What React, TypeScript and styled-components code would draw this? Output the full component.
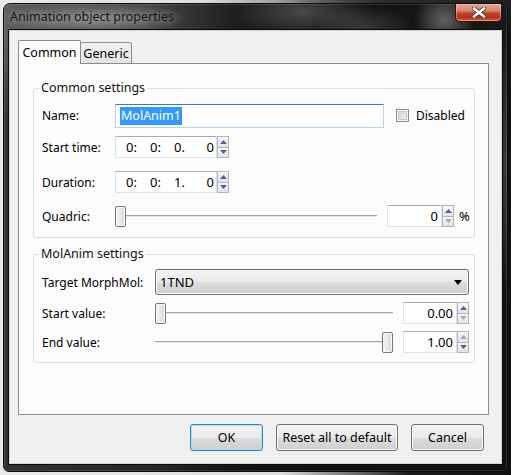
import React from "react";
import styled, { createGlobalStyle } from "styled-components";

const GlobalStyle = createGlobalStyle`
  html, body {
    margin: 0;
    padding: 0;
  }
  body {
    width: 511px;
    height: 475px;
    overflow: hidden;
    background:
      radial-gradient(220px 40px at 420px 0px, #2a2a2a, rgba(42, 42, 42, 0)),
      linear-gradient(to right, #e9e9e9 0%, #dcdcdc 55%, #1a1a1a 80%, #111 100%);
    font-family: "Noto Sans", "Liberation Sans", sans-serif;
    font-size: 12px;
    color: #000;
  }
  * {
    box-sizing: border-box;
  }
`;

type SpinState = { up: boolean; down: boolean };

function Slider({ width, value }: { width: number; value: number }) {
  return (
    <SliderBox $w={width}>
      <Track />
      <Thumb style={{ left: Math.round(value * (width - 11)) }} />
    </SliderBox>
  );
}

function Arrows({ up, down }: SpinState) {
  return (
    <ArrowStack>
      <ArrowButton $on={up}>
        <svg width="7" height="4" viewBox="0 0 7 4">
          <path d="M0 4 L3.5 0 L7 4 Z" fill="currentColor" />
        </svg>
      </ArrowButton>
      <ArrowButton $on={down}>
        <svg width="7" height="4" viewBox="0 0 7 4">
          <path d="M0 0 L7 0 L3.5 4 Z" fill="currentColor" />
        </svg>
      </ArrowButton>
    </ArrowStack>
  );
}

function SpinBox({ width, value, up, down }: { width: number; value: string } & SpinState) {
  return (
    <Spin>
      <SpinField $w={width}>{value}</SpinField>
      <Arrows up={up} down={down} />
    </Spin>
  );
}

function TimeSpin({ parts }: { parts: string[] }) {
  return (
    <Spin>
      <TimeField>
        <Seg>{parts[0]}:</Seg>
        <Seg>{parts[1]}:</Seg>
        <Seg>{parts[2]}.</Seg>
        <LastSeg>{parts[3]}</LastSeg>
      </TimeField>
      <Arrows up down />
    </Spin>
  );
}

export default function App() {
  return (
    <>
      <GlobalStyle />
      <Window>
        <TitleBar>
          <Title>Animation object properties</Title>
          <CloseButton>
            <svg width="14" height="11" viewBox="0 0 14 11">
              <path
                d="M2 1.5 L12 9.5 M12 1.5 L2 9.5"
                stroke="#3a3a3a"
                strokeWidth="4.2"
                strokeLinecap="square"
              />
              <path
                d="M2 1.5 L12 9.5 M12 1.5 L2 9.5"
                stroke="#fff"
                strokeWidth="2.4"
                strokeLinecap="square"
              />
            </svg>
          </CloseButton>
        </TitleBar>

        <Client>
          <TabStrip>
            <Tab $active $w={63}>Common</Tab>
            <Tab $w={51}>Generic</Tab>
          </TabStrip>

          <Panel>
            <Group>
              <Legend>Common settings</Legend>
              <Row $h={25} $mt={7}>
                <Label $w={73}>Name:</Label>
                <NameInput>
                  <Selected>MolAnim1</Selected>
                </NameInput>
                <Check />
                <CheckText>Disabled</CheckText>
              </Row>
              <Row $h={22} $mt={8}>
                <Label $w={73}>Start time:</Label>
                <TimeSpin parts={["0", "0", "0", "0"]} />
              </Row>
              <Row $h={22} $mt={13}>
                <Label $w={73}>Duration:</Label>
                <TimeSpin parts={["0", "0", "1", "0"]} />
              </Row>
              <Row $h={24} $mt={11} $mb={9}>
                <Label $w={73}>Quadric:</Label>
                <Slider width={262} value={0} />
                <Spacer $w={10} />
                <SpinBox width={55} value="0" up down={false} />
                <Unit>%</Unit>
              </Row>
            </Group>

            <Group $mt={8}>
              <Legend>MolAnim settings</Legend>
              <Row $h={26} $mt={7}>
                <Label $w={113}>Target MorphMol:</Label>
                <Combo>
                  <span>1TND</span>
                  <svg width="8" height="5" viewBox="0 0 8 5">
                    <path d="M0 0 L8 0 L4 5 Z" fill="#000" />
                  </svg>
                </Combo>
              </Row>
              <Row $h={24} $mt={6}>
                <Label $w={113}>Start value:</Label>
                <Slider width={238} value={0} />
                <Spacer $w={10} />
                <SpinBox width={54} value="0.00" up down={false} />
              </Row>
              <Row $h={24} $mt={5} $mb={8}>
                <Label $w={113}>End value:</Label>
                <Slider width={238} value={1} />
                <Spacer $w={10} />
                <SpinBox width={54} value="1.00" up={false} down />
              </Row>
            </Group>
          </Panel>

          <ButtonRow>
            <Button $default>OK</Button>
            <Button $w={122}>Reset all to default</Button>
            <Button>Cancel</Button>
          </ButtonRow>
        </Client>
      </Window>
    </>
  );
}

/* window frame */

const Window = styled.div`
  width: 505px;
  height: 469px;
  margin: 3px;
  display: flex;
  flex-direction: column;
  border: 1px solid #0c0c0c;
  border-radius: 7px 7px 6px 6px;
  overflow: hidden;
  background:
    radial-gradient(95px 16px at 92px 15px, rgba(175, 175, 175, 0.55), rgba(175, 175, 175, 0)),
    radial-gradient(70px 26px at 300px 8px, rgba(140, 140, 140, 0.45), rgba(140, 140, 140, 0)),
    radial-gradient(30px 30px at 440px 16px, rgba(190, 190, 190, 0.45), rgba(190, 190, 190, 0)),
    radial-gradient(50px 20px at 360px 22px, rgba(110, 110, 110, 0.4), rgba(110, 110, 110, 0)),
    radial-gradient(12px 140px at 504px 160px, rgba(120, 120, 120, 0.5), rgba(120, 120, 120, 0)),
    linear-gradient(to bottom, rgba(0, 0, 0, 0) 0px, rgba(0, 0, 0, 0) 30px, rgba(10, 12, 14, 0.55) 120px),
    linear-gradient(to right, #5e5e5e 0%, #474747 28%, #1e1e1e 46%, #111 62%, #181818 100%);
  box-shadow: inset 0 0 0 1px rgba(255, 255, 255, 0.12);
`;

const TitleBar = styled.div`
  height: 26px;
  flex: none;
  display: flex;
  align-items: flex-start;
  justify-content: space-between;
`;

const Title = styled.div`
  padding: 4px 0 0 6px;
  line-height: 17px;
  font-size: 12.5px;
  color: #151515;
  text-shadow:
    0 0 6px rgba(255, 255, 255, 0.35),
    0 0 10px rgba(255, 255, 255, 0.25);
`;

const CloseButton = styled.div`
  width: 47px;
  height: 18px;
  margin-right: 5px;
  display: grid;
  place-items: center;
  border: 1px solid #3a0d06;
  border-top: none;
  border-radius: 0 0 5px 5px;
  background: linear-gradient(
    to bottom,
    #e6a493 0%,
    #d98473 40%,
    #c24a32 52%,
    #b2301b 78%,
    #d4613f 100%
  );
  box-shadow: inset 0 0 0 1px rgba(255, 210, 190, 0.45);
`;

const Client = styled.div`
  flex: 1;
  margin: 0 5px 7px;
  padding: 9px 12px 0 8px;
  display: flex;
  flex-direction: column;
  background: #f0f0f0;
  border: 1px solid #d4d4d4;
  box-shadow: 0 0 0 1px #0a0a0a;
`;

/* tabs */

const TabStrip = styled.div`
  height: 23px;
  flex: none;
  display: flex;
  align-items: flex-end;
`;

const Tab = styled.div<{ $active?: boolean; $w: number }>`
  position: relative;
  z-index: ${({ $active }) => ($active ? 1 : 0)};
  width: ${({ $w }) => $w}px;
  height: ${({ $active }) => ($active ? 24 : 21)}px;
  margin-bottom: ${({ $active }) => ($active ? -1 : 0)}px;
  padding-top: ${({ $active }) => ($active ? 3 : 2)}px;
  text-align: center;
  line-height: 17px;
  font-size: 12.5px;
  border: 1px solid #898c95;
  border-bottom: none;
  border-left-width: ${({ $active }) => ($active ? 1 : 0)}px;
  background: ${({ $active }) =>
    $active ? "#fcfcfc" : "linear-gradient(to bottom, #f2f2f2, #e3e3e3)"};
  border-radius: 2px 2px 0 0;
`;

const Panel = styled.div`
  height: 352px;
  flex: none;
  padding: 16px 13px 0 14px;
  border: 1px solid #898c95;
  background: #fcfcfc;
`;

/* group boxes */

const Group = styled.fieldset<{ $mt?: number }>`
  margin: ${({ $mt }) => $mt ?? 0}px 0 0;
  padding: 0 6px 0 8px;
  min-width: 0;
  border: 1px solid #d5dfe5;
  border-radius: 3px;
`;

const Legend = styled.legend`
  margin-left: -3px;
  padding: 0 2px;
  line-height: 16px;
  font-size: 12.5px;
  color: #111;
`;

const Row = styled.div<{ $h: number; $mt: number; $mb?: number }>`
  display: flex;
  align-items: center;
  height: ${({ $h }) => $h}px;
  margin-top: ${({ $mt }) => $mt}px;
  margin-bottom: ${({ $mb }) => $mb ?? 0}px;
`;

const Label = styled.span<{ $w: number }>`
  width: ${({ $w }) => $w}px;
  flex: none;
  white-space: nowrap;
`;

const Spacer = styled.span<{ $w: number }>`
  width: ${({ $w }) => $w}px;
  flex: none;
`;

/* inputs */

const NameInput = styled.div`
  width: 269px;
  height: 24px;
  flex: none;
  display: flex;
  align-items: center;
  padding-left: 4px;
  font-size: 12.5px;
  background: #fff;
  border: 1px solid #b6d3ec;
  border-top-color: #3d7bad;
`;

const Selected = styled.span`
  padding: 0 1px;
  line-height: 18px;
  background: #3399ff;
  color: #fff;
`;

const Check = styled.span`
  width: 13px;
  height: 13px;
  flex: none;
  margin-left: 12px;
  border: 1px solid #8e8f8f;
  background: linear-gradient(135deg, #cfcfcf, #f6f6f6);
  box-shadow: inset 0 0 0 1px #f4f4f4, inset 0 0 0 2px #c9c9c9;
`;

const CheckText = styled.span`
  margin-left: 7px;
`;

const Spin = styled.div`
  display: flex;
  flex: none;
  height: 22px;
`;

const SpinField = styled.div<{ $w: number }>`
  width: ${({ $w }) => $w}px;
  height: 22px;
  padding-right: 3px;
  display: flex;
  align-items: center;
  justify-content: flex-end;
  font-size: 13px;
  background: #fff;
  border: 1px solid #dfe3e8;
  border-top-color: #abadb3;
`;

const TimeField = styled.div`
  width: 102px;
  height: 22px;
  padding: 0 2px 0 10px;
  display: flex;
  align-items: center;
  font-size: 13px;
  background: #fff;
  border: 1px solid #dfe3e8;
  border-top-color: #abadb3;
`;

const Seg = styled.span`
  width: 24px;
  flex: none;
`;

const LastSeg = styled.span`
  flex: 1;
  text-align: right;
`;

const ArrowStack = styled.div`
  width: 12px;
  display: flex;
  flex-direction: column;
`;

const ArrowButton = styled.div<{ $on: boolean }>`
  flex: 1;
  display: grid;
  place-items: center;
  color: ${({ $on }) => ($on ? "#4a5fae" : "#a9a9a9")};
  border: 1px solid #b4b4b4;
  background: linear-gradient(to bottom, #f8f8f8, #e4e4e4);
  & + & {
    border-top: none;
  }
`;

const Unit = styled.span`
  margin-left: 5px;
  font-size: 13px;
`;

const SliderBox = styled.div<{ $w: number }>`
  position: relative;
  width: ${({ $w }) => $w}px;
  height: 21px;
  flex: none;
`;

const Track = styled.div`
  position: absolute;
  left: 0;
  right: 0;
  top: 9px;
  height: 2px;
  border-top: 1px solid #a6a6a6;
  border-bottom: 1px solid #e7e7e7;
`;

const Thumb = styled.div`
  position: absolute;
  top: 0;
  width: 11px;
  height: 21px;
  border: 1px solid #767676;
  border-radius: 2px;
  background: linear-gradient(to right, #f6f6f6, #dadada);
  box-shadow: inset 0 0 0 1px #fbfbfb;
`;

const Combo = styled.div`
  width: 314px;
  height: 26px;
  flex: none;
  display: flex;
  align-items: center;
  justify-content: space-between;
  padding: 0 6px 0 4px;
  font-size: 13px;
  border: 1px solid #707070;
  border-radius: 3px;
  background: linear-gradient(
    to bottom,
    #f2f2f2 0%,
    #ebebeb 50%,
    #dddddd 51%,
    #cfcfcf 100%
  );
  box-shadow: inset 0 0 0 1px #fafafa;
`;

/* dialog buttons */

const ButtonRow = styled.div`
  margin-top: 9px;
  padding-right: 5px;
  display: flex;
  justify-content: flex-end;
  gap: 13px;
`;

const Button = styled.div<{ $w?: number; $default?: boolean }>`
  width: ${({ $w }) => $w ?? 73}px;
  height: 27px;
  display: grid;
  place-items: center;
  font-size: 12.5px;
  border: 1px solid ${({ $default }) => ($default ? "#3c7fb1" : "#707070")};
  border-radius: 3px;
  background: linear-gradient(
    to bottom,
    #f2f2f2 0%,
    #ebebeb 50%,
    #dddddd 51%,
    #cfcfcf 100%
  );
  box-shadow: inset 0 0 0 1px ${({ $default }) => ($default ? "#a8e3f7" : "#fbfbfb")};
`;
